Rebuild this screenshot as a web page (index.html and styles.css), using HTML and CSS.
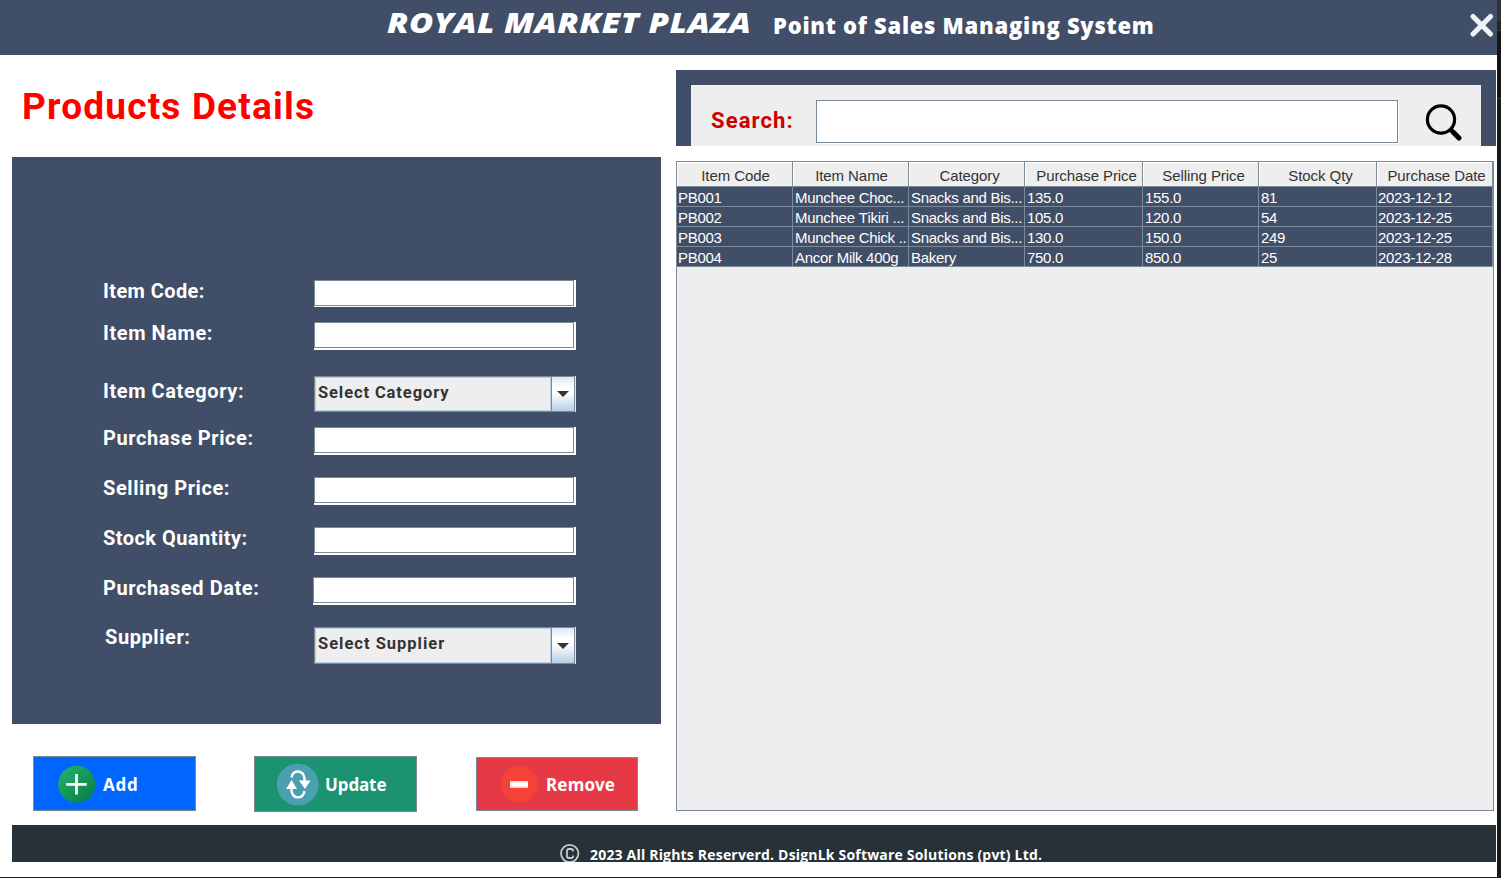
FILE: index.html
```html
<!DOCTYPE html>
<html lang="en">
<head>
<meta charset="utf-8">
<title>Royal Market Plaza - Products Details</title>
<link rel="stylesheet" href="styles.css">
</head>
<body>
<div class="screen">
<div class="window">
  <header class="topbar">
    <span class="brand">ROYAL MARKET PLAZA</span>
    <span class="tagline">Point of Sales Managing System</span>
    <svg class="close" width="26" height="26" viewBox="0 0 26 26"><path d="M4 4.500L21.500 22M21.500 4.500L4 22" stroke="#eff3f6" stroke-width="5.200" stroke-linecap="round"/></svg>
  </header>
  <main class="content">
    <section class="left">
      <h1 class="title">Products Details</h1>
      <form class="panel">
        <div class="row r-code"><label>Item Code:</label><div class="field"></div></div>
        <div class="row r-name"><label>Item Name:</label><div class="field"></div></div>
        <div class="row r-cat"><label>Item Category:</label>
          <div class="combo"><div class="combo-text"><span class="c-cat">Select Category</span></div><div class="combo-btn"><svg width="12" height="6" viewBox="0 0 12 6"><path d="M0 0H12L6 6Z" fill="#333"/></svg></div></div></div>
        <div class="row r-buy"><label>Purchase Price:</label><div class="field"></div></div>
        <div class="row r-sell"><label>Selling Price:</label><div class="field"></div></div>
        <div class="row r-stock"><label>Stock Quantity:</label><div class="field"></div></div>
        <div class="row r-date"><label>Purchased Date:</label><div class="field"></div></div>
        <div class="row r-sup"><label>Supplier:</label>
          <div class="combo"><div class="combo-text"><span class="c-sup">Select Supplier</span></div><div class="combo-btn"><svg width="12" height="6" viewBox="0 0 12 6"><path d="M0 0H12L6 6Z" fill="#333"/></svg></div></div></div>
      </form>
      <div class="actions">
        <div class="btn add">
          <svg width="38" height="38" viewBox="0 0 38 38"><defs><linearGradient id="g" x1="0" y1="0" x2="1" y2="1"><stop offset="0.1" stop-color="#21b06b"/><stop offset="0.9" stop-color="#0a7f44"/></linearGradient></defs><circle cx="18.700" cy="19.300" r="18.500" fill="url(#g)"/><path d="M18.500 9V29.500M8.300 19.300H28.700" stroke="#fff" stroke-width="2.800"/></svg>
          <span>Add</span>
        </div>
        <div class="btn update">
          <svg width="42" height="43" viewBox="0 0 42 43"><circle cx="20.700" cy="21.500" r="21" fill="#4a9fb1"/><g fill="none" stroke="#fff" stroke-width="2.400"><path d="M14.500 14.500C16 6.500 26 6.500 27.500 15V18"/><path d="M27.500 28C26 36.500 16 36.500 14.500 28V25"/></g><path d="M22 17.500H33.500L28 26ZM9 26H20L14.500 17Z" fill="#fff"/></svg>
          <span>Update</span>
        </div>
        <div class="btn remove">
          <svg width="37" height="38" viewBox="0 0 37 38"><circle cx="18.200" cy="19.300" r="18.300" fill="#f44336"/><rect x="9" y="16" width="18" height="7" fill="#ffcfcb"/><rect x="9" y="17.500" width="18" height="4" fill="#fff"/></svg>
          <span>Remove</span>
        </div>
      </div>
    </section>
    <section class="right">
      <div class="search">
        <div class="search-in">
          <span class="search-label">Search:</span>
          <div class="search-field"></div>
          <svg class="lens" width="40" height="41" viewBox="0 0 40 41"><circle cx="17" cy="17.500" r="13.600" fill="none" stroke="#000" stroke-width="3.200"/><path d="M26.500 27.500L29 30" stroke="#000" stroke-width="4"/><path d="M29 30L35 36" stroke="#000" stroke-width="5.200" stroke-linecap="round"/></svg>
        </div>
      </div>
      <div class="grid">
        <table>
          <colgroup><col class="w116"><col class="w116"><col class="w116"><col class="w118"><col class="w116"><col class="w118"><col class="w116"></colgroup>
          <thead><tr><th>Item Code</th><th>Item Name</th><th>Category</th><th>Purchase Price</th><th>Selling Price</th><th>Stock Qty</th><th>Purchase Date</th></tr></thead>
          <tbody>
            <tr><td>PB001</td><td>Munchee Choc...</td><td>Snacks and Bis...</td><td>135.0</td><td>155.0</td><td>81</td><td>2023-12-12</td></tr>
            <tr><td>PB002</td><td>Munchee Tikiri ...</td><td>Snacks and Bis...</td><td>105.0</td><td>120.0</td><td>54</td><td>2023-12-25</td></tr>
            <tr><td>PB003</td><td>Munchee Chick ..</td><td>Snacks and Bis...</td><td>130.0</td><td>150.0</td><td>249</td><td>2023-12-25</td></tr>
            <tr><td>PB004</td><td>Ancor Milk 400g</td><td>Bakery</td><td>750.0</td><td>850.0</td><td>25</td><td>2023-12-28</td></tr>
          </tbody>
        </table>
      </div>
    </section>
  </main>
  <footer class="footer">
    <svg width="20" height="20" viewBox="0 0 20 20" fill="none" stroke="#c3cbd0"><circle cx="9.700" cy="10.500" r="8.700" stroke-width="1.800"/><path d="M13 8.500V7.800Q13 6 11.200 6H9Q7 6 7 8V13Q7 15 9 15H11.200Q13 15 13 13.200V12.500" stroke-width="1.800"/></svg>
    <span>2023 All Rights Reserverd. DsignLk Software Solutions (pvt) Ltd.</span>
  </footer>
</div>
<div class="edge"></div>
</div>
</body>
</html>
```
FILE: styles.css
```css
*, *::before { box-sizing: border-box; }
body { margin: 0; background: #fff; overflow: hidden; }
.screen { display: flex; width: 1501px; height: 878px; }
.window { display: flex; flex-direction: column; width: 1497px; height: 878px; background: #fff; border-bottom: 1px solid #1c1c1c; }
.edge { width: 4px; height: 878px; background: linear-gradient(#333 0 21px, #262626 21px 30px, #3c3c3c 30px 31px, #151515 31px 98px, #3a3a3a 98px 99px, #171a1a 99px); }

.topbar { display: flex; align-items: flex-start; height: 55px; padding-left: 387px; background: #414e67; color: #fff; font-family: "Open Sans", sans-serif; font-weight: 800; white-space: nowrap; }
.brand { width: 386px; font-size: 29px; line-height: 44px; font-style: italic; letter-spacing: 0.400px; transform: scaleX(1.140); transform-origin: 0 50%; }
.tagline { width: 695px; font-size: 22px; line-height: 50px; letter-spacing: 0.730px; }
.close { flex: none; margin-top: 12px; margin-left: 1px; }

.content { display: flex; gap: 15px; height: 770px; padding-left: 12px; }
.left { width: 649px; }
.title { height: 102px; margin: 0; padding: 30px 0 0 10px; color: #f00; font: 700 37px/44px Roboto, sans-serif; letter-spacing: 1.180px; white-space: nowrap; }

.panel { display: flex; flex-direction: column; height: 567px; padding: 123px 0 0 91px; background: #414e67; }
.row { display: flex; align-items: flex-start; height: 28px; margin-bottom: 22px; }
.row label { width: 211px; color: #fff; font: 700 20px/22px Roboto, sans-serif; letter-spacing: 0.580px; white-space: nowrap; }
.r-code { height: 27px; margin-bottom: 15px; }
.row.r-code label { letter-spacing: 0.400px; }
.r-name { margin-bottom: 26px; }
.r-cat { height: 36px; margin-bottom: 15px; }
.r-cat label { padding-top: 4px; }
.row.r-stock label { letter-spacing: 0.460px; }
.r-date label { width: 210px; }
.r-sup { height: 37px; margin-bottom: 0; }
.r-sup label { margin-top: -1px; padding-left: 2px; }
.field { flex: none; width: 262px; height: 100%; padding: 0 2px 2px 0; background: #fff; }
.r-code .field { padding-bottom: 1px; }
.r-date .field { width: 263px; }
.field::before { content: ""; display: block; height: 100%; border: 1px solid #7a8a99; background: #fff; }
.combo { display: flex; width: 261px; height: 100%; border: 1px solid #7a8a99; box-shadow: 1px 0 #dbe6f0; }
.combo-text { flex: 1; padding-left: 2px; border: 1px solid #b8cfe5; background: #eee; color: #333; font: 700 16.500px/29px Roboto, sans-serif; letter-spacing: 0.900px; white-space: nowrap; }
.c-sup { letter-spacing: 1px; }
.combo-btn { display: flex; align-items: center; justify-content: center; width: 23px; border-left: 1px solid #7a8a99; background: linear-gradient(#dde8f3, #fff 30%, #fff 45%, #b8cfe5); }

.actions { display: flex; align-items: flex-start; padding: 32px 0 0 21px; }
.btn { display: flex; align-items: center; flex: none; width: 163px; height: 55px; border: 1px solid #7a8a99; color: #fff; font: 700 17px/24px "Noto Sans", sans-serif; letter-spacing: 0.200px; white-space: nowrap; }
.btn span { padding-top: 1px; }
.add { background: #06f; padding-left: 24px; gap: 7px; }
.add span { padding-top: 3px; letter-spacing: 0.700px; }
.update { height: 56px; margin-left: 58px; padding-left: 22px; gap: 6px; background: #1b9370; letter-spacing: -0.100px; }
.remove { width: 162px; height: 54px; margin: 1px 0 0 59px; padding-left: 24px; gap: 8px; background: #e63946; }

.right { width: 820px; padding-top: 15px; }
.search { height: 76px; padding: 15px 15px 0; background: #414e67; }
.search-in { display: flex; height: 61px; padding: 15px 0 0 20px; background: #eee; }
.search-label { width: 105px; color: #c00; font: 700 22px/41px Roboto, sans-serif; letter-spacing: 1.100px; }
.search-field { width: 582px; height: 43px; border: 1px solid #7a8a99; background: #fff; box-shadow: 1px 1px #fff; }
.lens { margin: 2px 0 0 26px; }

.grid { width: 818px; height: 650px; margin-top: 15px; border: 1px solid #7a8a99; background: #eee; }
table { width: 816px; table-layout: fixed; border-collapse: separate; border-spacing: 0; font: 15px "Liberation Sans", Arial, sans-serif; font-kerning: none; }
.w116 { width: 116px; }
.w118 { width: 118px; }
th { height: 25px; padding: 3px 0 0 2px; border-right: 1px solid #7a8a99; border-bottom: 1px solid #7a8a99; box-shadow: inset 1px 1px #fff; color: #333; font-weight: 400; line-height: 19px; letter-spacing: -0.080px; text-align: center; white-space: nowrap; }
th:nth-child(n+3) { padding-left: 6px; }
th:last-child { padding-left: 4px; }
td { height: 20px; padding: 2px 0 0 2px; border-right: 1px solid #7a8a99; border-bottom: 1px solid #7a8a99; background: #414e67; color: #fff; line-height: 17px; letter-spacing: -0.280px; white-space: nowrap; }
td:first-child { padding-left: 1px; }
td:last-child { padding-left: 1px; }

.footer { display: flex; width: 1484px; height: 37px; margin-left: 12px; padding: 18px 0 0 548px; gap: 10px; overflow: hidden; background: #263238; color: #fff; font: 700 14px/24px "Open Sans", sans-serif; letter-spacing: 0.190px; white-space: nowrap; }
.footer svg { flex: none; }
```
